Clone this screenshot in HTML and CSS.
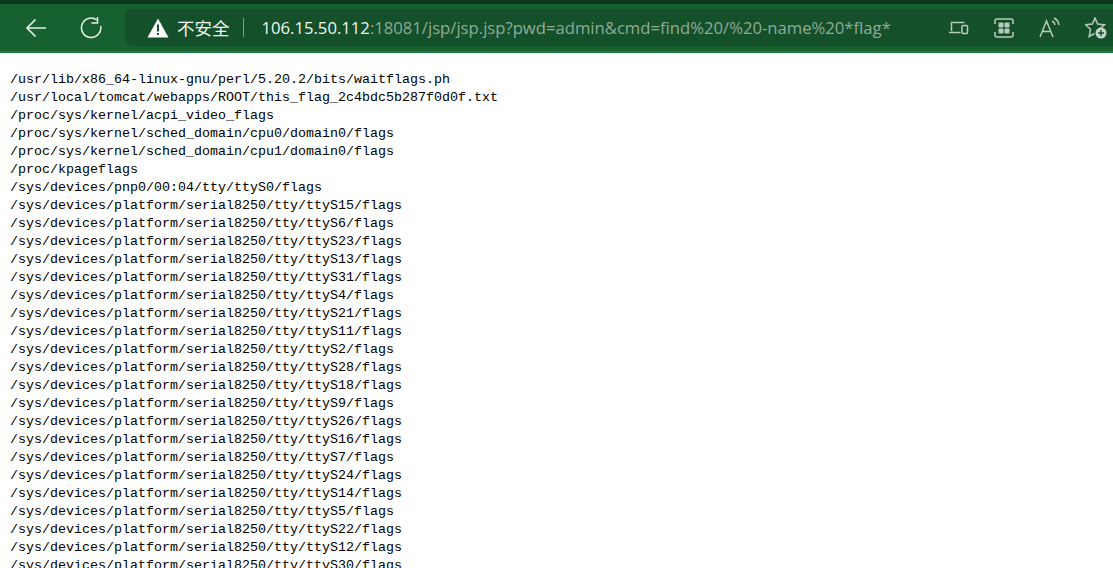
FILE: index.html
```html
<!DOCTYPE html>
<html lang="zh">
<head>
<meta charset="utf-8">
<title>jsp</title>
<link rel="stylesheet" href="styles.css">
</head>
<body>
<header class="toolbar">
  <button class="nav back" aria-label="back">
    <svg width="22" height="20" viewBox="0 0 22 20"><path d="M21 10H2M10.500 1.500 2 10l8.500 8.500" class="stroke"/></svg>
  </button>
  <button class="nav reload" aria-label="reload">
    <svg width="22" height="22" viewBox="0 0 22 22"><path d="M16.800 2.900A9.700 9.700 0 1 0 20.700 9" class="stroke thin"/><path d="M17.500 0v6h-6" class="stroke thin"/></svg>
  </button>
  <div class="address">
    <svg class="warn" width="22" height="20" viewBox="0 0 22 20"><path d="M11 0.500 21.500 19.500H.5z" fill="#fff"/><path d="M10 6.500h2v7h-2zM10 15h2v2h-2z" fill="#17502c"/></svg>
    <span class="insecure">不安全</span>
    <span class="sep"></span>
    <span class="url"><span class="host">106.15.50.112</span>:18081/jsp/jsp.jsp?pwd=admin&amp;cmd=find%20/%20-name%20*flag*</span>
    <span class="icons">
      <svg width="20" height="16" viewBox="0 0 20 16"><path d="M2.500 11V2.500h13M0 12.500h11.500" class="icon"/><rect x="13" y="5.500" width="5.500" height="8" rx="1" class="icon"/></svg>
      <svg width="20" height="20" viewBox="0 0 20 20"><path d="M1 6V3a2 2 0 0 1 2-2h14a2 2 0 0 1 2 2v3M1 14v3a2 2 0 0 0 2 2h14a2 2 0 0 0 2-2v-3" class="icon"/><rect x="4.500" y="4.500" width="5" height="5" rx="1" class="fill"/><rect x="10.500" y="4.500" width="5" height="5" rx="1" class="fill"/><rect x="4.500" y="10.500" width="5" height="5" rx="1" class="fill"/><rect x="10.500" y="10.500" width="5" height="5" rx="1" class="fill"/></svg>
      <svg width="21" height="22" viewBox="0 0 21 22"><path d="M1 20 7.500 4 14 20M3.500 14.500h8M13 4a5 5 0 0 1 3 4M15 1a9 9 0 0 1 5 7" class="icon"/></svg>
      <svg width="22" height="22" viewBox="0 0 22 22"><path d="M14.600 12 19.500 7.800 12.600 7 10 1 7.400 7 .5 7.800 5.500 12.300 4.200 19.500 9.500 16.500" class="icon"/><circle cx="16" cy="16" r="5.500" fill="#c4d2c9"/><path d="M16 13v6M13 16h6" stroke="#14502a" stroke-width="1.500"/></svg>
    </span>
  </div>
</header>
<pre class="output">/usr/lib/x86_64-linux-gnu/perl/5.20.2/bits/waitflags.ph
/usr/local/tomcat/webapps/ROOT/this_flag_2c4bdc5b287f0d0f.txt
/proc/sys/kernel/acpi_video_flags
/proc/sys/kernel/sched_domain/cpu0/domain0/flags
/proc/sys/kernel/sched_domain/cpu1/domain0/flags
/proc/kpageflags
/sys/devices/pnp0/00:04/tty/ttyS0/flags
/sys/devices/platform/serial8250/tty/ttyS15/flags
/sys/devices/platform/serial8250/tty/ttyS6/flags
/sys/devices/platform/serial8250/tty/ttyS23/flags
/sys/devices/platform/serial8250/tty/ttyS13/flags
/sys/devices/platform/serial8250/tty/ttyS31/flags
/sys/devices/platform/serial8250/tty/ttyS4/flags
/sys/devices/platform/serial8250/tty/ttyS21/flags
/sys/devices/platform/serial8250/tty/ttyS11/flags
/sys/devices/platform/serial8250/tty/ttyS2/flags
/sys/devices/platform/serial8250/tty/ttyS28/flags
/sys/devices/platform/serial8250/tty/ttyS18/flags
/sys/devices/platform/serial8250/tty/ttyS9/flags
/sys/devices/platform/serial8250/tty/ttyS26/flags
/sys/devices/platform/serial8250/tty/ttyS16/flags
/sys/devices/platform/serial8250/tty/ttyS7/flags
/sys/devices/platform/serial8250/tty/ttyS24/flags
/sys/devices/platform/serial8250/tty/ttyS14/flags
/sys/devices/platform/serial8250/tty/ttyS5/flags
/sys/devices/platform/serial8250/tty/ttyS22/flags
/sys/devices/platform/serial8250/tty/ttyS12/flags
/sys/devices/platform/serial8250/tty/ttyS30/flags</pre>
</body>
</html>
```

FILE: styles.css
```css
html, body {
  margin: 0;
  height: 100%;
  overflow: hidden;
  background: #fff;
}
.toolbar {
  display: flex;
  align-items: center;
  box-sizing: border-box;
  height: 53px;
  padding: 4px 0 1px 0;
  background: #17602f;
  border-top: 1px solid #0c3d1e;
  border-bottom: 2px solid #1d7a40;
  box-shadow: inset 0 3px 0 #0a3a1b;
}
.nav {
  display: flex;
  align-items: center;
  justify-content: center;
  width: 55px;
  height: 40px;
  padding: 0;
  border: 0;
  background: none;
}
.back { margin-left: 8px; }
.reload { margin-right: 7px; }
.stroke {
  fill: none;
  stroke: #e6eee9;
  stroke-width: 1.7;
}
.stroke.thin { stroke-width: 1.5; }
.address {
  flex: 1;
  display: flex;
  align-items: center;
  height: 37px;
  padding-left: 22px;
  border-radius: 8px 0 0 8px;
  background: #14502a;
  font-family: "Open Sans", "Noto Sans CJK SC", sans-serif;
  font-size: 16.670px;
  white-space: nowrap;
}
.warn { flex: none; }
.insecure {
  margin-left: 8px;
  color: #f2f5f3;
  font-family: "Noto Sans CJK SC", sans-serif;
  font-size: 17.500px;
}
.sep {
  width: 1px;
  height: 19px;
  margin: 0 18px 0 13px;
  background: #7fa08c;
}
.url { color: #90ab9a; }
.host { color: #f2f5f3; }
.icons {
  display: flex;
  align-items: center;
  gap: 25px;
  margin-left: auto;
  padding-right: 6px;
}
.icon {
  fill: none;
  stroke: #b9cbbf;
  stroke-width: 1.500;
}
.fill { fill: #b9cbbf; }
.output {
  margin: 0;
  padding: 18px 10px 0;
  color: #000;
  font-family: "Liberation Mono", monospace;
  font-size: 13.333px;
  line-height: 18px;
}
```
